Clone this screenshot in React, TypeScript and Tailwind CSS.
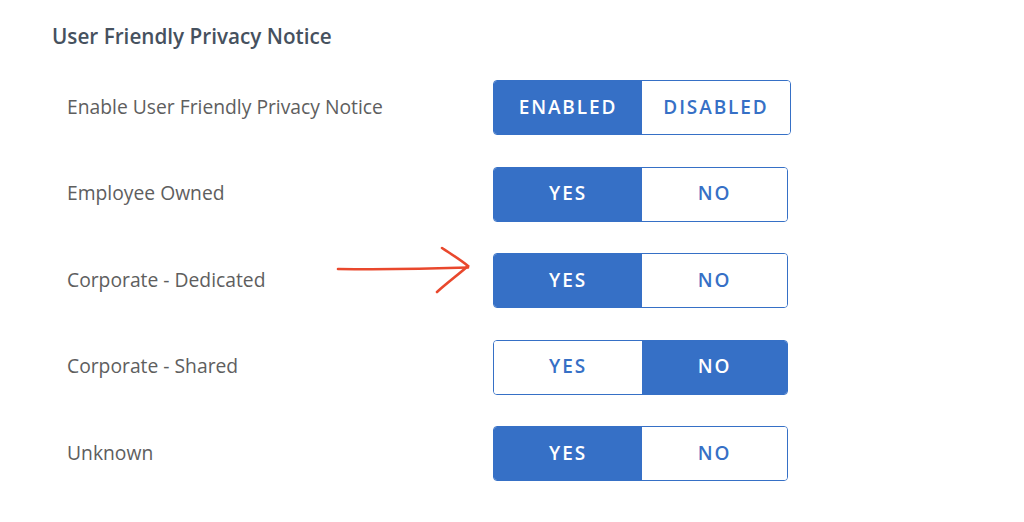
const rows = [
  { label: 'Enable User Friendly Privacy Notice', options: ['ENABLED', 'DISABLED'], active: 0, wide: true },
  { label: 'Employee Owned', options: ['YES', 'NO'], active: 0 },
  { label: 'Corporate - Dedicated', options: ['YES', 'NO'], active: 0, arrow: true },
  { label: 'Corporate - Shared', options: ['YES', 'NO'], active: 1 },
  { label: 'Unknown', options: ['YES', 'NO'], active: 0 },
];

function Toggle({ options, active, wide }: { options: string[]; active: number; wide?: boolean }) {
  return (
    <div
      className={`grid grid-cols-[148px_1fr] h-[55px] rounded-[4px] border border-[#3670c6] overflow-hidden ${
        wide ? 'w-[298px]' : 'w-[295px]'
      }`}
    >
      {options.map((o, i) => (
        <div
          key={o}
          className={`flex items-center justify-center text-[19px] leading-[26px] pb-[2px] font-semibold tracking-[0.1em] ${
            i === active ? 'bg-[#3670c6] text-white' : 'bg-white text-[#3670c6]'
          }`}
        >
          {o}
        </div>
      ))}
    </div>
  );
}

export default function App() {
  return (
    <div className="w-[1024px] h-[522px] bg-white font-['Open_Sans',sans-serif] pt-[22px] pl-[52px]">
      <h2 className="text-[20.7px] leading-[28px] font-semibold text-[#46515e]">User Friendly Privacy Notice</h2>
      <div className="mt-[30px] pl-[15px] flex flex-col gap-[31.5px]">
        {rows.map((r) => (
          <div key={r.label} className="relative flex items-center h-[55px]">
            <div className="w-[426px] text-[19.3px] leading-[26px] -mt-[2px] text-[#5e5e5e]">{r.label}</div>
            <Toggle options={r.options} active={r.active} wide={r.wide} />
            {r.arrow && (
              <svg
                className="absolute left-[268px] top-[-10px]"
                width="140"
                height="56"
                viewBox="0 0 140 56"
                fill="none"
                stroke="#e9482d"
                strokeWidth="2.6"
                strokeLinecap="round"
              >
                <path d="M3 26 C40 26.5, 90 26, 133 24.5" />
                <path d="M107 5 C116 11, 126 17, 133 23 C124 31, 112 40, 102 49" />
              </svg>
            )}
          </div>
        ))}
      </div>
    </div>
  );
}
